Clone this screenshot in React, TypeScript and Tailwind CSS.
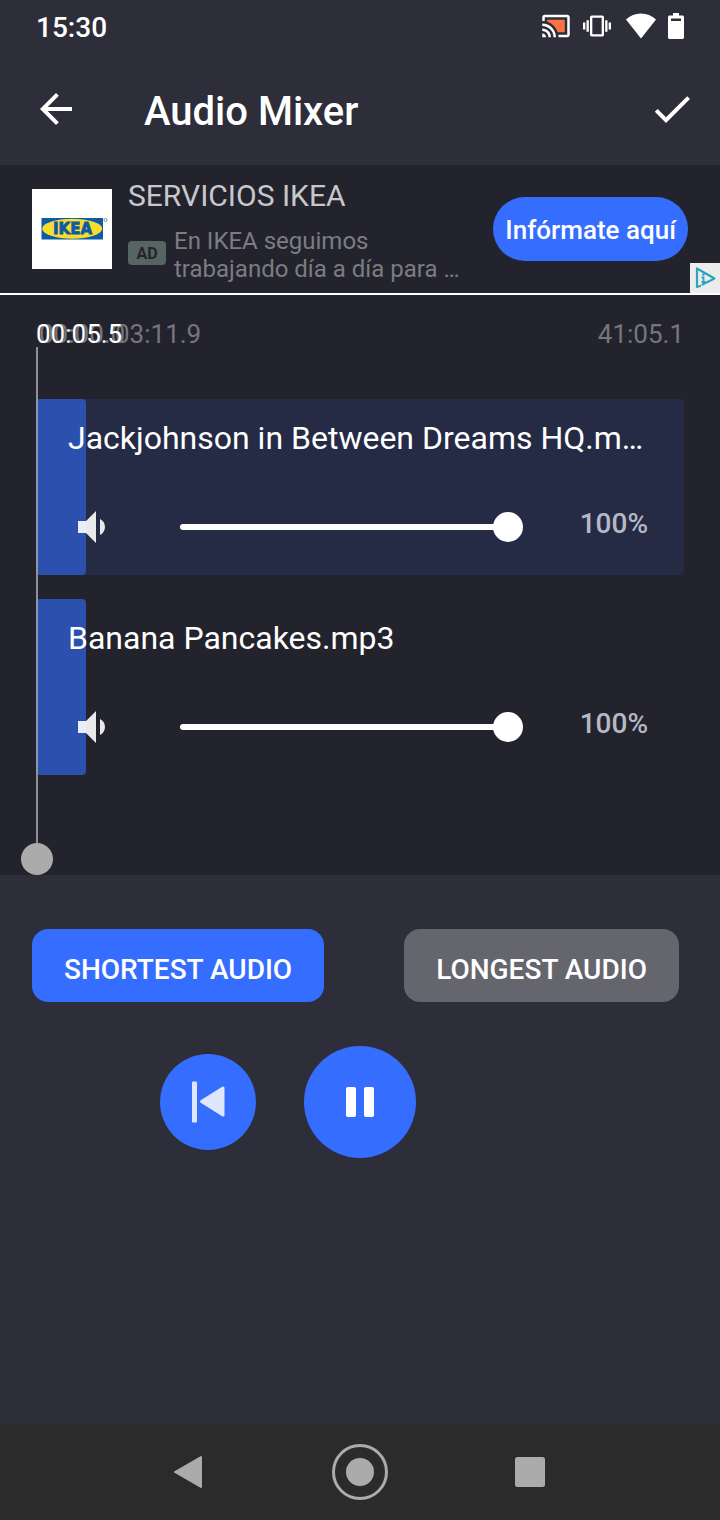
import { useState } from "react";
import { MdArrowBack, MdCheck, MdVibration, MdVolumeDown } from "react-icons/md";

const tracks = [
  {
    id: "track-1",
    title: "Jackjohnson in Between Dreams HQ.m…",
    background: "bg-[#252a45]",
  },
  {
    id: "track-2",
    title: "Banana Pancakes.mp3",
    background: "",
  },
];

function StatusBar() {
  return (
    <div className="flex h-[54px] items-center justify-between px-9 text-white">
      <span className="pt-[2px] text-[28px] leading-8 font-medium">15:30</span>
      <div className="flex items-center pb-[2px]">
        <svg viewBox="0 0 24 24" className="size-[30px]" aria-hidden="true">
          <path fill="#ff7043" d="M5 7v1.63c3.96 1.28 7.09 4.41 8.37 8.37H19V7z" />
          <path
            fill="#fff"
            d="M1 18v3h3c0-1.66-1.34-3-3-3zm0-4v2c2.76 0 5 2.24 5 5h2c0-3.87-3.13-7-7-7zm0-4v2c4.97 0 9 4.03 9 9h2c0-6.08-4.93-11-11-11zm20-7H3c-1.1 0-2 .9-2 2v3h2V5h18v14h-7v2h7c1.1 0 2-.9 2-2V5c0-1.1-.9-2-2-2z"
          />
        </svg>
        <MdVibration className="ml-3 size-7" aria-hidden="true" />
        <svg viewBox="0 0 30 26" className="ml-[15px] h-[26px] w-[30px]" aria-hidden="true">
          <path fill="#fff" d="M0 6.500C4 2.500 9.500.5 15 .5s11 2 15 6L15 25.500z" />
        </svg>
        <svg viewBox="0 0 16 26" className="ml-3 h-[26px] w-4" aria-hidden="true">
          <path
            fill="#fff"
            fillRule="evenodd"
            d="M5 0h6v2.500h3.500c.8 0 1.500.7 1.500 1.500v20.500c0 .8-.7 1.500-1.500 1.500h-13C.7 26 0 25.300 0 24.500V4c0-.8.7-1.500 1.500-1.500H5zM3 5.500v2.500h10V5.500z"
          />
        </svg>
      </div>
    </div>
  );
}

function Header() {
  return (
    <header className="flex h-[111px] items-center px-6 pb-[2px] text-white">
      <button type="button" aria-label="Back" className="p-2">
        <MdArrowBack className="size-12" />
      </button>
      <h1 className="ml-14 flex-1 pt-[6px] text-[40px] leading-12 font-medium">Audio Mixer</h1>
      <button type="button" aria-label="Done">
        <MdCheck className="size-12" />
      </button>
    </header>
  );
}

function AdBanner() {
  return (
    <aside className="relative flex h-[130px] items-center border-b-2 border-white bg-[#23232d] px-8">
      <svg viewBox="0 0 80 80" className="size-20 shrink-0" role="img" aria-label="IKEA">
        <rect width="80" height="80" fill="#fff" />
        <rect x="9.500" y="29" width="61.500" height="21.500" fill="#0d5aa5" />
        <ellipse cx="40.200" cy="39.700" rx="30" ry="10" fill="#f8dc2c" />
        <text
          x="40.500"
          y="45"
          textAnchor="middle"
          fontFamily="DejaVu Sans, sans-serif"
          fontWeight="700"
          fontSize="15"
          fill="#0d5aa5"
          stroke="#0d5aa5"
          strokeWidth="0.8"
        >
          IKEA
        </text>
        <circle cx="73.500" cy="31" r="1.500" fill="none" stroke="#7d90ad" strokeWidth="1" />
      </svg>
      <div className="ml-4 min-w-0 flex-1 self-start pt-[13px]">
        <p className="text-[30px] leading-9 text-[#c8c8cb]">SERVICIOS IKEA</p>
        <div className="mt-[13px] flex items-center gap-2">
          <span className="mt-[-4px] flex h-6 w-[38px] shrink-0 items-center justify-center rounded bg-[#566462] pt-[2px] text-base leading-6 font-bold text-[#24242d]">
            AD
          </span>
          <p className="text-2xl leading-7 text-[#7c7c81]">
            En IKEA seguimos
            <br />
            trabajando día a día para …
          </p>
        </div>
      </div>
      <button
        type="button"
        className="h-16 shrink-0 rounded-full bg-[#356dff] px-3 pt-[2px] text-[26px] leading-8 font-medium text-white"
      >
        Infórmate aquí
      </button>
      <a href="#adchoices" aria-label="AdChoices" className="absolute right-0 bottom-0">
        <svg viewBox="0 0 30 30" className="size-[30px]" aria-hidden="true">
          <rect width="30" height="30" fill="#ececec" />
          <path
            d="M12.500 21.500L24.500 15.500 7 5.500v18.500l3-1"
            fill="none"
            stroke="#2ba5bf"
            strokeWidth="2.200"
            strokeLinejoin="round"
            strokeLinecap="round"
          />
          <circle cx="13.300" cy="11.500" r="1.300" fill="#2ba5bf" />
          <path d="M11.500 14.500h2v4.500M11.500 19h4" fill="none" stroke="#2ba5bf" strokeWidth="1.800" />
        </svg>
      </a>
    </aside>
  );
}

function Track({ id, title, background }: { id: string; title: string; background: string }) {
  const [volume, setVolume] = useState(100);

  return (
    <li className={`relative h-44 rounded ${background}`}>
      {/* played part of the track */}
      <div className="absolute inset-y-0 left-0 w-[50px] rounded bg-[#2b50ae]" />
      <div className="relative pt-5 pr-9 pl-8">
        <label htmlFor={id} className="block truncate text-[32px] leading-[38px] text-white">
          {title}
        </label>
        <div className="mt-[46px] flex items-center">
          <MdVolumeDown className="size-12 shrink-0 text-white/90" aria-hidden="true" />
          <input
            id={id}
            type="range"
            min={0}
            max={100}
            value={volume}
            onChange={(e) => setVolume(Number(e.target.value))}
            className="ml-16 h-[30px] min-w-0 flex-1 appearance-none bg-transparent [&::-webkit-slider-runnable-track]:h-[6px] [&::-webkit-slider-runnable-track]:rounded-full [&::-webkit-slider-runnable-track]:bg-linear-to-r [&::-webkit-slider-runnable-track]:from-white [&::-webkit-slider-runnable-track]:from-95% [&::-webkit-slider-runnable-track]:to-transparent [&::-webkit-slider-runnable-track]:to-95% [&::-webkit-slider-thumb]:mt-[-12px] [&::-webkit-slider-thumb]:size-[30px] [&::-webkit-slider-thumb]:appearance-none [&::-webkit-slider-thumb]:rounded-full [&::-webkit-slider-thumb]:bg-white"
          />
          <output htmlFor={id} className="w-[125px] pb-[6px] text-right text-[28px] leading-8 font-medium text-[#b7b8c6]">
            {volume}%
          </output>
        </div>
      </div>
    </li>
  );
}

function Timeline() {
  return (
    <section className="relative h-[580px] bg-[#23232d] px-9 pt-6 text-[26px] leading-[30px]">
      {/* the current time slides over the range labels */}
      <div className="relative flex h-[30px] justify-end text-[#76767d]">
        <span className="absolute top-0 left-[3px]">00:00.0</span>
        <span className="absolute top-0 left-[79px]">03:11.9</span>
        <span className="absolute top-0 left-0 text-white">00:05.5</span>
        <span>41:05.1</span>
      </div>
      <ul className="mt-[50px] flex flex-col gap-6">
        {tracks.map((track) => (
          <Track key={track.id} {...track} />
        ))}
      </ul>
      {/* playhead */}
      <div className="absolute top-[52px] bottom-0 left-[21px] flex w-8 flex-col items-center">
        <div className="w-[2px] flex-1 bg-[#a9a9ad]/80" />
        <button type="button" aria-label="Playhead" className="size-8 rounded-full bg-[#ababab]" />
      </div>
    </section>
  );
}

function Controls() {
  return (
    <section className="flex-1 px-8 pt-[54px] text-white">
      <div className="flex gap-20 text-[28px] leading-8 font-medium">
        <button type="button" className="h-[73px] rounded-2xl bg-[#356dff] px-8 pt-2 whitespace-nowrap">
          SHORTEST AUDIO
        </button>
        <button type="button" className="h-[73px] rounded-2xl bg-[#65656e] px-8 pt-2 whitespace-nowrap">
          LONGEST AUDIO
        </button>
      </div>
      <div className="mt-11 grid grid-cols-[1fr_auto_1fr] items-center gap-12">
        <button
          type="button"
          aria-label="Back to start"
          className="flex size-24 items-center justify-center justify-self-end rounded-full bg-[#356dff]"
        >
          <svg viewBox="0 0 34 42" className="h-[42px] w-[34px]" aria-hidden="true">
            <rect x="1" y="0.500" width="5" height="41" rx="1" fill="#dfe7ff" />
            <path d="M10.500 20.500L32 7v27z" fill="#dfe7ff" stroke="#dfe7ff" strokeWidth="3" strokeLinejoin="round" />
          </svg>
        </button>
        <button
          type="button"
          aria-label="Pause"
          className="flex size-28 items-center justify-center gap-2 rounded-full bg-[#356dff]"
        >
          <span className="h-[30px] w-[10px] rounded-xs bg-white" />
          <span className="h-[30px] w-[10px] rounded-xs bg-white" />
        </button>
      </div>
    </section>
  );
}

function NavigationBar() {
  return (
    <nav className="flex h-24 items-center justify-center gap-[114px] bg-[#2b2b2b]">
      <button type="button" aria-label="Back">
        <svg viewBox="0 0 56 56" className="size-14" fill="#ababab" stroke="#ababab" strokeWidth="2" strokeLinejoin="round">
          <path d="M13 28l26-15v30z" />
        </svg>
      </button>
      <button type="button" aria-label="Home">
        <svg viewBox="0 0 56 56" className="size-14">
          <circle cx="28" cy="28" r="26.500" fill="none" stroke="#ababab" strokeWidth="3" />
          <circle cx="28" cy="28" r="14" fill="#ababab" />
        </svg>
      </button>
      <button type="button" aria-label="Recent apps">
        <svg viewBox="0 0 56 56" className="size-14" fill="#ababab">
          <rect x="13" y="13" width="30" height="30" rx="2.500" />
        </svg>
      </button>
    </nav>
  );
}

export default function App() {
  return (
    <div className="flex min-h-screen flex-col bg-[#2e2e3a] font-['Roboto',sans-serif]">
      <StatusBar />
      <Header />
      <AdBanner />
      <Timeline />
      <Controls />
      <NavigationBar />
    </div>
  );
}
